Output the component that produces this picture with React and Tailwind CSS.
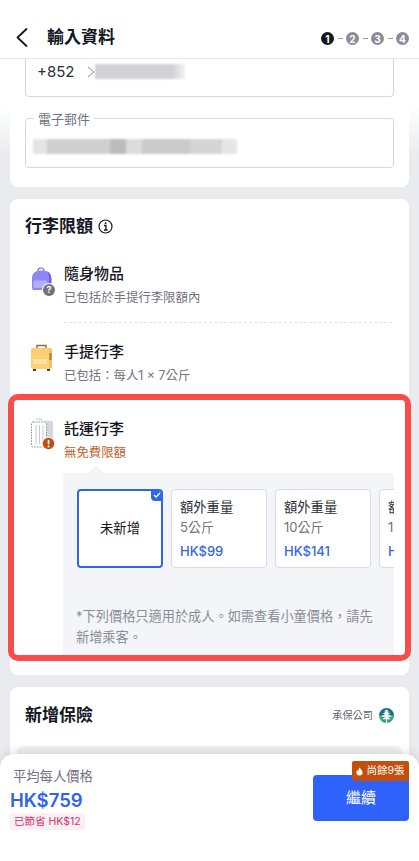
import React from "react";

function Step({ n, active }) {
  return (
    <span className={`w-[13px] h-[13px] rounded-full flex items-center justify-center text-[10px] font-bold text-[#fff] leading-none ${active ? "bg-[#14171f]" : "bg-[#8a8d96]"}`}>{n}</span>
  );
}
function Dash() {
  return <span className="w-[5px] h-[1.5px] mx-[3.5px] bg-[#9a9da5]" />;
}

function Backpack() {
  return (
    <svg width="27" height="31" viewBox="0 0 27 31" className="block">
      <path d="M8 4 Q8 1 11 1 Q14 1 14 4" fill="none" stroke="#6f66e0" strokeWidth="1.2" />
      <path d="M2 20 L2 11 Q2 4 10 3.5 L13 3.5 Q21 4 21 11 L21 23 L3.5 23 Q2 23 2 20 Z" fill="#8f86f5" />
      <path d="M16 4 Q21 5 21.5 12 L21.5 23 L19 23 L19 10 Q19 6 16 4 Z" fill="#6a5fe0" />
      <rect x="3.5" y="13.5" width="13.5" height="7.5" rx="1.2" fill="#b3adfa" />
      <circle cx="19" cy="23" r="7" fill="#fff" />
      <circle cx="19" cy="23" r="6" fill="#70737d" />
      <text x="19" y="26.2" textAnchor="middle" fontSize="9" fontWeight="700" fill="#fff" fontFamily="Inter, sans-serif">?</text>
    </svg>
  );
}
function Suitcase() {
  return (
    <svg width="24" height="27" viewBox="0 0 24 27" className="block">
      <path d="M7 4 L7 1.5 L16 1.5 L16 4" fill="none" stroke="#9a6a45" strokeWidth="1.5" />
      <rect x="1" y="4" width="21" height="21" rx="2.5" fill="#f7c15c" />
      <rect x="1" y="4" width="18" height="21" rx="2.5" fill="#fbcf74" />
      <rect x="19.5" y="9" width="2" height="7" fill="#a97a3f" />
      <rect x="3" y="15" width="14" height="5" rx="0.5" fill="#fde3a8" />
      <rect x="3" y="25" width="3" height="2" fill="#3b3b3b" />
      <rect x="17" y="25" width="3" height="2" fill="#3b3b3b" />
    </svg>
  );
}
function DashedCase() {
  return (
    <svg width="25" height="33" viewBox="0 0 25 33" className="block">
      <rect x="14" y="4" width="9" height="22" rx="1" fill="#d5d7de" />
      <rect x="1.5" y="5" width="15" height="25" rx="1.5" fill="#fff" stroke="#8d9098" strokeWidth="1" strokeDasharray="1.6 1.2" />
      <path d="M6 2 H12 V5 M6 8 V27 M9.5 8 V27 M13 8 V27" fill="none" stroke="#c5c8cf" strokeWidth="1" />
      <circle cx="18.5" cy="26.5" r="6.5" fill="#fff" />
      <circle cx="18.5" cy="26.5" r="5.8" fill="#c44d0b" />
      <rect x="17.7" y="22.8" width="1.7" height="4.8" rx="0.8" fill="#fff" />
      <circle cx="18.5" cy="29.5" r="1" fill="#fff" />
    </svg>
  );
}
function Tree() {
  return (
    <svg width="15" height="15" viewBox="0 0 15 15" className="block">
      <defs>
        <clipPath id="c"><circle cx="7.5" cy="7.5" r="7.5" /></clipPath>
      </defs>
      <g clipPath="url(#c)">
        <rect width="15" height="7" fill="#17708f" />
        <rect y="7" width="15" height="8" fill="#2fa36a" />
        <path d="M7.5 1.5 L10 3.5 H5 Z M7.5 3.2 L11.5 6 H3.5 Z M7.5 5.6 L13.5 8.8 H1.5 Z" fill="#fff" />
        <path d="M7.5 8 L12 11.3 H3 Z" fill="#fff" />
        <rect x="6.9" y="9" width="1.2" height="6" fill="#fff" />
      </g>
    </svg>
  );
}
function Flame() {
  return (
    <svg width="7" height="9" viewBox="0 0 9 11" className="block">
      <path d="M4.8 0.5 C5.2 2.5 8.5 4 8.5 7 C8.5 9.2 6.8 10.5 4.5 10.5 C2.2 10.5 0.5 9.2 0.5 7 C0.5 5.4 1.4 4.4 2.2 3.6 C2.4 4.4 2.7 4.9 3.2 5.1 C3 3.4 3.6 1.6 4.8 0.5 Z" fill="#fff" />
    </svg>
  );
}

function BagRow({ icon, title, sub, subClass = "text-[#70737c]", dashed, iconClass }) {
  return (
    <div className="flex">
      <div className={`w-[39px] shrink-0 pl-[5px] ${iconClass}`}>{icon}</div>
      <div className="flex-1">
        <div className="text-[15px] leading-[20px] font-medium text-[#14171f]">{title}</div>
        <div className={`text-[12.4px] leading-[18px] mt-[5px] ${subClass}`}>{sub}</div>
        {dashed && <div className="mt-[15px] mr-[2px] border-t border-dashed border-[#e2e4e9]" />}
      </div>
    </div>
  );
}

function Option({ weight, price }) {
  return (
    <div className="w-[96px] h-[79px] shrink-0 bg-white rounded-[4px] border border-[#d9dbe1] pl-[8px] pt-[7px]">
      <div className="text-[13.3px] leading-[20px] font-normal text-[#2a2d35] whitespace-nowrap">額外重量</div>
      <div className="text-[13px] leading-[18px] mt-[1px] text-[#70737c] whitespace-nowrap">{weight}</div>
      <div className="text-[13px] leading-[16px] mt-[7px] font-medium text-[#3366e6] whitespace-nowrap">{price}</div>
    </div>
  );
}

export default function App() {
  return (
    <div
      className="relative w-[419px] h-[861px] overflow-hidden bg-[#e9ebef] flex flex-col"
      style={{ fontFamily: 'Inter, "Noto Sans CJK TC", "Noto Sans", sans-serif' }}
    >
      <header className="h-[59px] shrink-0 bg-white border-b border-[#e4e5e9] flex items-start pt-[28px] pl-[16px] pr-[10px]">
        <svg width="12" height="19" viewBox="0 0 12 19" fill="none" className="block">
          <path d="M10.5 1 L1.5 9.5 L10.5 18" stroke="#14171f" strokeWidth="1.8" strokeLinecap="round" strokeLinejoin="round" />
        </svg>
        <h1 className="ml-[19px] text-[17px] leading-[18px] font-semibold text-[#14171f]">輸入資料</h1>
        <div className="ml-auto mt-[4px] flex items-center">
          <Step n="1" active />
          <Dash />
          <Step n="2" />
          <Dash />
          <Step n="3" />
          <Dash />
          <Step n="4" />
        </div>
      </header>

      <main className="flex-1 overflow-hidden bg-gradient-to-b from-white from-[6%] to-[#e9ebef] to-[12%] px-[10px]">
        <section className="bg-white rounded-b-[8px] h-[128px] px-[15px]">
          <div className="h-[38px] border-x border-b border-[#d6d8de] rounded-b-[4px] pl-[11px] pt-[3px] flex items-start">
            <span className="text-[15px] leading-[20px] text-[#2a2d35]">+852</span>
            <svg width="8" height="12" viewBox="0 0 8 12" fill="none" className="block ml-[13px] mt-[4px]">
              <path d="M1 1 L7 6 L1 11" stroke="#8a8d96" strokeWidth="1" />
            </svg>
            <div className="mt-[2px] w-[90px] h-[15px] bg-gradient-to-r from-[#d2d2d4] from-[85%] to-[#f2f2f3] blur-[1px]" />
          </div>
          <div className="relative mt-[21px] h-[50px] border border-[#d6d8de] rounded-[4px]">
            <span className="absolute left-[8px] -top-[7px] px-[4px] bg-white text-[13px] leading-[14px] text-[#70737c]">電子郵件</span>
            <div className="absolute left-[7px] top-[20px] flex h-[15px] blur-[1px]">
              <div className="w-[14px] bg-[#e4e4e6]" />
              <div className="w-[63px] bg-[#cfcfd1]" />
              <div className="w-[16px] bg-[#bcbcbe]" />
              <div className="w-[16px] bg-[#dcdcde]" />
              <div className="w-[48px] bg-[#cbcbcd]" />
              <div className="w-[32px] bg-[#d5d5d7]" />
              <div className="w-[15px] bg-[#e6e6e8]" />
            </div>
          </div>
        </section>

        <section className="mt-[12px] bg-white rounded-[8px] h-[476px] pt-[16px]">
          <div className="flex items-center pl-[15px] h-[22px]">
            <h2 className="text-[17px] leading-[22px] font-semibold text-[#14171f]">行李限額</h2>
            <svg width="15" height="15" viewBox="0 0 15 15" fill="none" className="ml-[5px] block">
              <circle cx="7.5" cy="7.5" r="6.5" stroke="#14171f" strokeWidth="1.2" />
              <path d="M6 6.5 H7.9 V11 M6 11 H9.6" stroke="#14171f" strokeWidth="1.3" />
              <circle cx="7.6" cy="4.2" r="0.9" fill="#14171f" />
            </svg>
          </div>

          <div className="mt-[27px] pl-[15px] pr-[15px]">
            <BagRow icon={<Backpack />} title="隨身物品" sub="已包括於手提行李限額內" dashed iconClass="pt-[3px]" />
            <div className="mt-[19px]">
              <BagRow icon={<Suitcase />} title="手提行李" sub={"已包括\uFF1A每人1 × 7公斤"} iconClass="pt-[2px]" />
            </div>
          </div>

          <div className="mt-[9px] -mx-[2px] h-[267px] border-[6px] border-[#f94d4a] rounded-[10px] overflow-hidden pt-[19px] pl-[11px]">
            <div className="pr-[15px]">
              <BagRow
                icon={<DashedCase />}
                title="託運行李"
                sub="無免費限額"
                subClass="text-[#c2601f]"
                iconClass="pl-[5px] -mt-[2px]"
              />
            </div>
            <div className="relative mt-[11px] ml-[38px] mr-[11px] h-[200px] bg-[#f3f5f9] rounded-t-[4px] pt-[16px]">
              <span className="absolute left-[27px] -top-[5px] w-[12px] h-[12px] rotate-45 bg-[#f3f5f9]" />
              <div className="relative flex gap-[8px] pl-[14px] overflow-hidden">
                <div className="relative w-[86px] h-[79px] shrink-0 bg-white rounded-[4px] border-2 border-[#2f66ee] flex items-center justify-center text-[13.3px] font-normal text-[#14171f] overflow-hidden">
                  未新增
                  <span className="absolute -top-[2px] -right-[2px] w-[12px] h-[12px] bg-[#2f66ee] rounded-bl-[4px] flex items-center justify-center">
                    <svg width="8" height="6" viewBox="0 0 8 6" fill="none" className="block">
                      <path d="M1 3 L3 5 L7 1" stroke="#fff" strokeWidth="1.3" />
                    </svg>
                  </span>
                </div>
                <Option weight="5公斤" price="HK$99" />
                <Option weight="10公斤" price="HK$141" />
                <Option weight="15公斤" price="HK$183" />
              </div>
              <p className="mt-[38px] pl-[13px] pr-[14px] text-[13.2px] leading-[21px] text-[#8a8d96]">
                {"*下列價格只適用於成人。如需查看小童價格\uFF0C請先新增乘客。"}
              </p>
            </div>
          </div>
        </section>

        <section className="mt-[12px] bg-white rounded-t-[8px] h-[200px] px-[7px] pt-[17px]">
          <div className="flex items-center justify-between px-[8px]">
            <h2 className="text-[17px] leading-[22px] font-bold text-[#14171f]">新增保險</h2>
            <div className="flex items-center">
              <span className="text-[10.2px] leading-[15px] text-[#5d6068]">承保公司</span>
              <span className="ml-[6px]"><Tree /></span>
            </div>
          </div>
          <div className="mt-[20px] h-[60px] bg-[#f0f1f4] rounded-[6px]" />
        </section>
      </main>

      <footer className="absolute left-0 right-0 bottom-0 h-[107px] bg-white rounded-t-[14px] shadow-[0_-3px_10px_rgba(0,0,0,0.10)] pl-[10px] pr-[10px] flex justify-between">
        <div className="pt-[13px]">
          <div className="pl-[3px] text-[13.3px] leading-[18px] text-[#70737c]">平均每人價格</div>
          <div className="mt-[3px] text-[18.5px] leading-[24px] font-semibold text-[#2e62f5]">HK$759</div>
          <div className="mt-[1px] w-fit h-[17px] px-[4px] flex items-center bg-[#fdeef3] rounded-[2px] text-[10.5px] text-[#c9356e] whitespace-nowrap">已節省 HK$12</div>
        </div>
        <div className="relative mt-[21px] w-[96px] h-[46px] bg-[#2e62fb] rounded-[4px] flex items-center justify-center text-white text-[15px] font-normal">
          繼續
          <div className="absolute -top-[14px] right-0 h-[20px] w-[57px] bg-[#c24f0c] rounded-t-[2px] rounded-bl-[4px] flex items-center justify-center gap-[3px] text-[10.5px] text-white whitespace-nowrap font-normal">
            <Flame />
            <span>尚餘9張</span>
          </div>
        </div>
      </footer>
    </div>
  );
}
